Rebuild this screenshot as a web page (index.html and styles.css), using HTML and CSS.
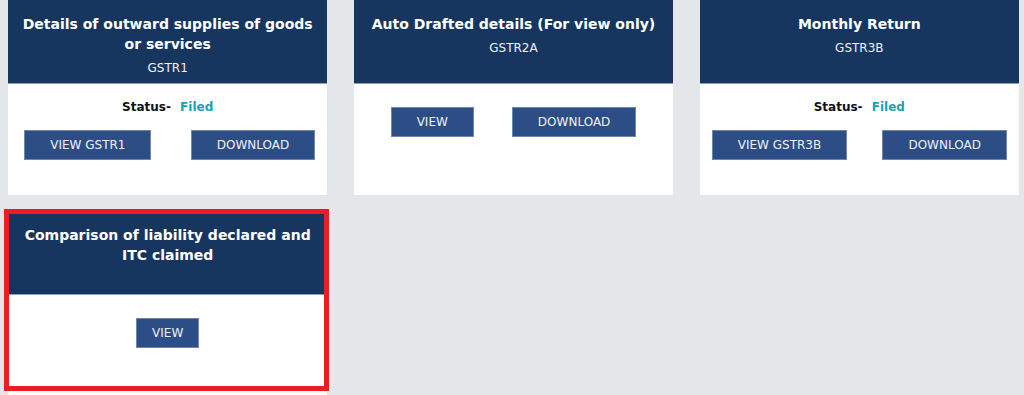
FILE: index.html
```html
<!DOCTYPE html>
<html lang="en">

<head>
    <meta charset="UTF-8">
    <meta name="viewport" content="width=device-width, initial-scale=1.0">
    <title>Returns</title>
    <link rel="stylesheet" href="styles.css">
</head>

<body>
    <div class="tiles">
        <div class="tile">
            <div class="tile-head">
                <div class="tile-title">Details of outward supplies of goods or services</div>
                <div class="tile-code">GSTR1</div>
            </div>
            <div class="tile-body">
                <div class="status">Status- <span class="status-value">Filed</span></div>
                <div class="actions split">
                    <div class="cell"><button class="btn">VIEW GSTR1</button></div>
                    <div class="cell"><button class="btn">DOWNLOAD</button></div>
                </div>
            </div>
        </div>

        <div class="tile">
            <div class="tile-head">
                <div class="tile-title">Auto Drafted details (For view only)</div>
                <div class="tile-code">GSTR2A</div>
            </div>
            <div class="tile-body">
                <div class="actions centered">
                    <button class="btn">VIEW</button>
                    <button class="btn">DOWNLOAD</button>
                </div>
            </div>
        </div>

        <div class="tile">
            <div class="tile-head">
                <div class="tile-title">Monthly Return</div>
                <div class="tile-code">GSTR3B</div>
            </div>
            <div class="tile-body">
                <div class="status">Status- <span class="status-value">Filed</span></div>
                <div class="actions split">
                    <div class="cell"><button class="btn">VIEW GSTR3B</button></div>
                    <div class="cell"><button class="btn">DOWNLOAD</button></div>
                </div>
            </div>
        </div>

        <div class="tile highlighted">
            <div class="tile-head">
                <div class="tile-title">Comparison of liability declared and ITC claimed</div>
            </div>
            <div class="tile-body">
                <div class="actions centered">
                    <button class="btn btn-small">VIEW</button>
                </div>
            </div>
            <!-- red annotation frame -->
            <div class="marker"></div>
        </div>
    </div>
</body>

</html>
```

FILE: styles.css
```css
body {
    font-family: 'DejaVu Sans', Verdana, sans-serif;
    background-color: #e4e7ea;
    margin: 0;
    padding: 0;
    color: #111;
}

.tiles {
    display: grid;
    grid-template-columns: repeat(3, 1fr);
    column-gap: 26.5px;
    row-gap: 16px;
    padding: 0 5px 0 8px;
}

.tile {
    position: relative;
    background-color: #fff;
    height: 195px;
}

.tile-head {
    background-color: #163660;
    border-bottom: 1px solid #8a9fb8;
    height: 84px;
    box-sizing: border-box;
    padding: 14px 10px 0;
    text-align: center;
    color: #fff;
}

.tile-title {
    font-size: 14px;
    font-weight: bold;
    line-height: 20px;
}

.tile-code {
    font-size: 12px;
    line-height: 18px;
    margin-top: 5px;
    color: #eef2f7;
}

.tile-body {
    padding-top: 14px;
    text-align: center;
}

.status {
    font-size: 12px;
    font-weight: bold;
    line-height: 18px;
    margin-bottom: 14px;
}

.status-value {
    color: #1ba1b5;
    margin-left: 5px;
}

.actions.split {
    display: grid;
    grid-template-columns: 1fr 1fr;
}

.actions.split .cell:last-child {
    padding-left: 11px;
}

.actions.centered {
    display: flex;
    justify-content: center;
    gap: 38px;
    padding-top: 9px;
}

.btn {
    font-family: 'DejaVu Sans', Verdana, sans-serif;
    font-size: 12px;
    height: 30px;
    padding: 0 25px;
    background-color: #2d4d86;
    color: #eef2f8;
    border: 1px solid #6f85aa;
    cursor: pointer;
}

.btn-small {
    padding: 0 15px;
}

.marker {
    position: absolute;
    top: -2px;
    left: -4px;
    width: calc(100% + 6px);
    height: 182px;
    box-sizing: border-box;
    border: 5px solid #ec1c24;
    pointer-events: none;
}
```
